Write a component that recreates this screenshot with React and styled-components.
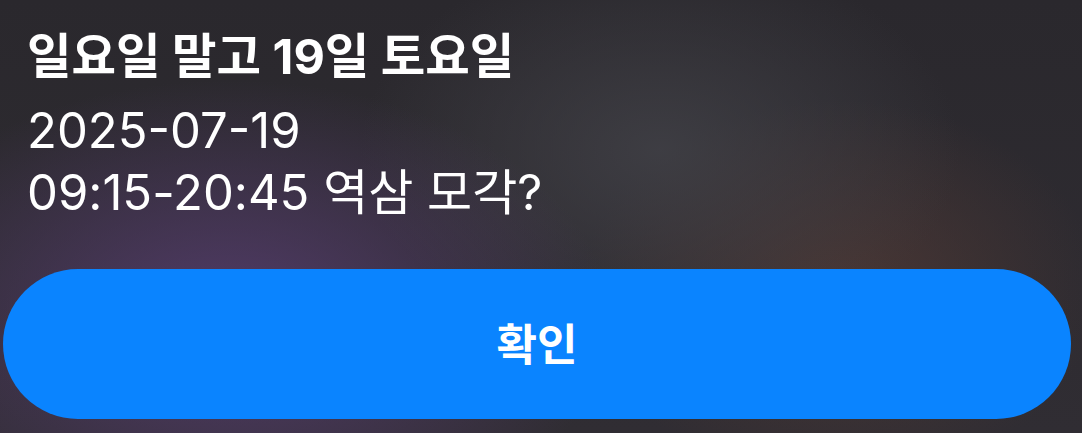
import React from "react";
import styled, { createGlobalStyle } from "styled-components";

const GlobalStyle = createGlobalStyle`
  html, body {
    margin: 0;
    padding: 0;
    background: #2a292c;
  }
  * {
    box-sizing: border-box;
  }
`;

const Sheet = styled.div`
  width: 1082px;
  height: 433px;
  overflow: hidden;
  display: flex;
  flex-direction: column;
  padding: 24px 11px 0 3px;
  font-family: Inter, "Noto Sans CJK KR", sans-serif;
  color: #fff;
  background:
    radial-gradient(ellipse 380px 240px at 230px 320px, rgba(88, 62, 114, 0.85), rgba(88, 62, 114, 0) 100%),
    radial-gradient(ellipse 300px 200px at 660px 150px, rgba(66, 66, 72, 0.8), rgba(66, 66, 72, 0) 100%),
    radial-gradient(ellipse 260px 190px at 840px 290px, rgba(78, 56, 52, 0.85), rgba(78, 56, 52, 0) 100%),
    linear-gradient(180deg, #2a282d 0%, #302d33 100%);
`;

const Message = styled.div`
  padding-left: 24px;
  display: flex;
  flex-direction: column;
`;

const Title = styled.div`
  font-size: 48.4px;
  font-weight: 700;
  line-height: 66px;
  margin-bottom: 10px;
`;

const Line = styled.div`
  font-size: 49px;
  font-weight: 400;
  line-height: 62px;
`;

const ConfirmButton = styled.button`
  margin-top: 45px;
  height: 150px;
  width: 100%;
  border: none;
  border-radius: 75px;
  background: #0a84ff;
  color: #fff;
  font-family: Inter, "Noto Sans CJK KR", sans-serif;
  font-size: 44px;
  font-weight: 600;
  display: flex;
  align-items: center;
  justify-content: center;
  padding-bottom: 6px;
`;

export default function App() {
  return (
    <>
      <GlobalStyle />
      <Sheet>
        <Message>
          <Title>일요일 말고 19일 토요일</Title>
          <Line>2025-07-19</Line>
          <Line>09:15-20:45 역삼 모각?</Line>
        </Message>
        <ConfirmButton>확인</ConfirmButton>
      </Sheet>
    </>
  );
}
